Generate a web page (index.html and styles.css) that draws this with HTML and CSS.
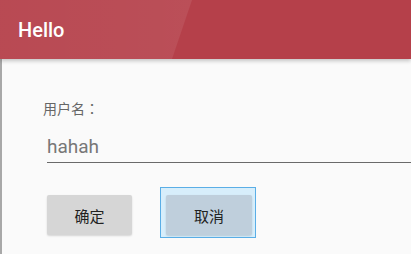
FILE: index.html
```html
<!DOCTYPE html>
<html>
<head>
<meta charset="utf-8">
<link rel="stylesheet" href="styles.css">
</head>
<body>
<header class="appbar">
  <div class="shine"></div>
  <h1 class="title">Hello</h1>
</header>
<main class="content">
  <label class="label">用户名<span class="colon">：</span></label>
  <div class="field">hahah</div>
  <div class="actions">
    <div class="btn-wrap"><button class="btn">确定</button></div>
    <div class="btn-wrap focused"><button class="btn btn-focus">取消</button></div>
  </div>
</main>
</body>
</html>
```
FILE: styles.css
```css
html, body {
  margin: 0;
  padding: 0;
  width: 411px;
  height: 254px;
  overflow: hidden;
  background: #fafafa;
  font-family: Roboto, "Noto Sans CJK SC", sans-serif;
}
.appbar {
  position: relative;
  height: 59px;
  background: #b5404a;
  display: flex;
  align-items: center;
  box-shadow: 0 2px 4px rgba(0,0,0,0.22);
  z-index: 1;
}
.shine {
  position: absolute;
  left: 0;
  top: 0;
  width: 192px;
  height: 100%;
  background: linear-gradient(90deg, rgba(255,255,255,0.05), rgba(255,255,255,0.08));
  clip-path: polygon(0 0, 192px 0, 172px 100%, 0 100%);
}
.title {
  position: relative;
  margin: 0 0 0 18px;
  color: #fff;
  font-size: 20px;
  font-weight: 500;
}
.content {
  height: 195px;
  border-left: 2px solid #a8a8a8;
  box-sizing: border-box;
  padding: 41px 0 0 41px;
  display: flex;
  flex-direction: column;
}
.label {
  font-size: 14px;
  color: #666;
  line-height: 16px;
}
.colon {
  font-family: "Noto Sans CJK JP", sans-serif;
}
.field {
  margin-top: 18px;
  margin-left: 4px;
  font-size: 19px;
  color: #777;
  line-height: 24px;
  border-bottom: 1px solid #6a6a6a;
  padding-bottom: 3px;
}
.actions {
  display: flex;
  align-items: flex-start;
  margin-top: 25px;
  margin-left: 4px;
}
.btn-wrap {
  padding-top: 7px;
}
.btn-wrap.focused {
  margin-left: 29px;
  padding: 7px 3px 2px 5px;
  background: #d7eefb;
  outline: 1px solid #5aaee6;
}
.btn {
  width: 85px;
  height: 40px;
  border: none;
  border-radius: 2px;
  background: #d6d6d6;
  font-family: Roboto, "Noto Sans CJK SC", sans-serif;
  font-size: 15px;
  color: #222;
  box-shadow: 0 1px 2px rgba(0,0,0,0.15);
  display: block;
  padding: 0;
}
.btn-focus {
  width: 86px;
  background: #bfcfdc;
}
```
